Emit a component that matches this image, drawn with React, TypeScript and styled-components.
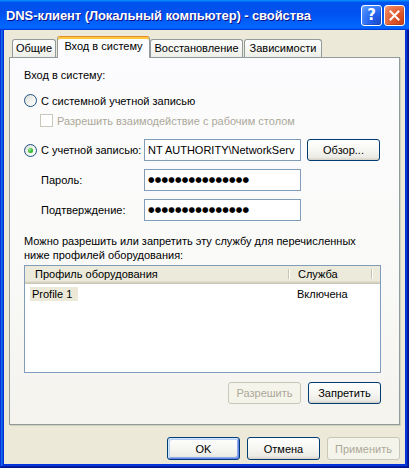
import React from "react";
import styled, { createGlobalStyle } from "styled-components";

const GlobalStyle = createGlobalStyle`
  html, body { margin: 0; padding: 0; background: #ffffff; }
  body { font-family: "Liberation Sans", Arial, sans-serif; font-size: 11px; color: #000; }
  * { box-sizing: border-box; }
`;

const Window = styled.div`
  width: 409px;
  height: 468px;
  display: flex;
  flex-direction: column;
  background: #0831d9;
  box-shadow: inset -1px -1px #00138c, inset 1px 0 #0831d9, inset -2px -2px #001ea0,
    inset 2px 0 #166aee, inset -3px -3px #003bda, inset 3px 0 #0855dd;
`;

const TitleBar = styled.div`
  height: 30px;
  flex: none;
  display: flex;
  align-items: center;
  padding: 0 4px 0 6px;
  background: linear-gradient(
    180deg,
    #0997ff,
    #0053ee 8%,
    #0050ee 40%,
    #0066ff 88%,
    #0066ff 93%,
    #005bff 95%,
    #003dd7 96%,
    #003dd7
  );
`;

const TitleText = styled.div`
  flex: 1;
  color: #fff;
  font-family: "Liberation Sans", Arial, sans-serif;
  font-weight: bold;
  font-size: 13px;
  letter-spacing: -0.1px;
  text-shadow: 1px 1px #0f1089;
  white-space: nowrap;
  padding-top: 1px;
`;

const CaptionButtons = styled.div`
  display: flex;
  gap: 2px;
`;

const CaptionButton = styled.div<{ $variant: "help" | "close" }>`
  width: 21px;
  height: 21px;
  border: 1px solid #fff;
  border-radius: 3px;
  display: flex;
  align-items: center;
  justify-content: center;
  color: #fff;
  font-family: "DejaVu Sans", sans-serif;
  font-weight: bold;
  font-size: 15px;
  background: ${(p) =>
    p.$variant === "close"
      ? "radial-gradient(circle at 85% 85%, #cc4419 0%, #e0582c 40%, #ec7f56 80%, #f7ab8f 100%)"
      : "radial-gradient(circle at 85% 85%, #1c4ed0 0%, #2565f0 40%, #4a8bfb 80%, #7db0ff 100%)"};
  box-shadow: inset -1px -1px rgba(0, 0, 0, 0.15);
`;

const Client = styled.div`
  flex: 1;
  display: flex;
  flex-direction: column;
  margin: 0 4px 4px 4px;
  background: #ece9d8;
  padding: 6px 5px 0 5px;
`;

const TabStrip = styled.div`
  height: 21px;
  flex: none;
  display: flex;
  align-items: flex-end;
  padding-left: 3px;
`;

const Tab = styled.div<{ $w: number; $active?: boolean }>`
  width: ${(p) => p.$w}px;
  height: ${(p) => (p.$active ? 22 : 18)}px;
  margin-right: ${(p) => (p.$active ? 0 : 1)}px;
  margin-bottom: ${(p) => (p.$active ? -1 : 0)}px;
  position: relative;
  z-index: ${(p) => (p.$active ? 2 : 0)};
  border: 1px solid #919b9c;
  border-bottom: none;
  border-top-color: ${(p) => (p.$active ? "#e68b2c" : "#919b9c")};
  border-radius: 3px 3px 0 0;
  display: flex;
  justify-content: center;
  padding-top: ${(p) => (p.$active ? 3 : 2)}px;
  white-space: nowrap;
  background: ${(p) =>
    p.$active
      ? "#fcfcfe"
      : "linear-gradient(180deg, #ffffff, #fafaf9 26%, #f0f0ea 95%, #ecebe6)"};
  box-shadow: ${(p) => (p.$active ? "inset 0 2px #ffc83c" : "none")};
`;

const Panel = styled.div`
  flex: 1;
  border: 1px solid #919b9c;
  background: linear-gradient(180deg, #fcfcfe 0%, #f9f9f7 60%, #f4f3ee 100%);
  box-shadow: 1px 1px #d0cebf;
  padding: 11px 18px 0 14px;
  display: flex;
  flex-direction: column;
`;

const Label = styled.div<{ $mt?: number }>`
  line-height: 13px;
  margin-top: ${(p) => p.$mt ?? 0}px;
`;

const OptionRow = styled.div<{ $mt?: number; $indent?: number }>`
  display: flex;
  align-items: center;
  gap: 4px;
  height: 13px;
  margin-top: ${(p) => p.$mt ?? 0}px;
  padding-left: ${(p) => p.$indent ?? 0}px;
`;

const Radio = styled.span<{ $checked?: boolean }>`
  width: 13px;
  height: 13px;
  flex: none;
  border-radius: 50%;
  border: 1px solid #1c5180;
  background: linear-gradient(135deg, #dcdcd7 0%, #f2f2ee 55%, #ffffff 100%);
  display: inline-flex;
  align-items: center;
  justify-content: center;
  &::after {
    content: "";
    width: 5px;
    height: 5px;
    border-radius: 50%;
    background: radial-gradient(circle at 35% 35%, #8cf08a 0%, #3bbd37 50%, #1e941e 100%);
    display: ${(p) => (p.$checked ? "block" : "none")};
  }
`;

const CheckBox = styled.span`
  width: 13px;
  height: 13px;
  flex: none;
  border: 1px solid #cac8bb;
  background: #ffffff;
`;

const Muted = styled.span`
  color: #aca899;
`;

const FieldRow = styled.div<{ $mt: number }>`
  display: flex;
  align-items: center;
  height: 22px;
  margin-top: ${(p) => p.$mt}px;
`;

const FieldLabel = styled.div<{ $w: number; $indent?: number }>`
  width: ${(p) => p.$w}px;
  padding-left: ${(p) => p.$indent ?? 0}px;
  flex: none;
  display: flex;
  align-items: center;
  gap: 4px;
`;

const TextBox = styled.div<{ $secret?: boolean }>`
  width: 157px;
  height: 22px;
  flex: none;
  border: 1px solid #7f9db9;
  background: #fff;
  padding: 0 3px;
  line-height: 20px;
  white-space: nowrap;
  overflow: hidden;
  font-family: ${(p) => (p.$secret ? '"DejaVu Sans", sans-serif' : '"Liberation Sans", Arial, sans-serif')};
  font-size: ${(p) => (p.$secret ? "7.5px" : "11px")};
  letter-spacing: ${(p) => (p.$secret ? "0.2px" : "0")};
`;

const Button = styled.div<{ $w?: number; $disabled?: boolean; $default?: boolean; $ml?: number }>`
  width: ${(p) => p.$w ?? 73}px;
  height: ${(p) => (p.$default !== undefined ? 23 : 22)}px;
  flex: none;
  margin-left: ${(p) => p.$ml ?? 0}px;
  border: 1px solid ${(p) => (p.$disabled ? "#c9c7ba" : "#003c74")};
  border-radius: 3px;
  display: flex;
  align-items: center;
  justify-content: center;
  color: ${(p) => (p.$disabled ? "#aca899" : "#000")};
  background: ${(p) =>
    p.$disabled ? "#f5f4ea" : "linear-gradient(180deg, #ffffff, #f6f6f2 50%, #ecebe6 86%, #d6d0c5)"};
  box-shadow: ${(p) =>
    p.$default
      ? "inset 1px 1px #cee7ff, inset -1px -1px #6982ee, inset 2px 2px #bcd4f6, inset -2px -2px #89ade4"
      : "none"};
`;

const Paragraph = styled.div`
  margin-top: 13px;
  line-height: 14px;
`;

const ListBox = styled.div`
  margin-top: 3px;
  height: 108px;
  flex: none;
  border: 1px solid #7f9db9;
  background: #fff;
  display: flex;
  flex-direction: column;
`;

const ListHeader = styled.div`
  height: 18px;
  display: flex;
  background: #ebeadb;
  box-shadow: inset 0 -1px #cbc7b8, inset 0 -2px #d6d2c2, inset 0 -3px #e2decd;
`;

const HeaderCell = styled.div<{ $w?: number; $pl: number }>`
  width: ${(p) => (p.$w ? `${p.$w}px` : "auto")};
  flex: ${(p) => (p.$w ? "none" : "1")};
  padding-left: ${(p) => p.$pl}px;
  line-height: 16px;
  white-space: nowrap;
`;

const HeaderSep = styled.div`
  width: 2px;
  flex: none;
  margin: 3px 0 5px;
  border-left: 1px solid #c7c5b2;
  border-right: 1px solid #ffffff;
`;

const ListRow = styled.div`
  display: flex;
  margin-top: 3px;
  height: 14px;
  line-height: 14px;
`;

const RowCell = styled.div<{ $w?: number; $pl: number }>`
  width: ${(p) => (p.$w ? `${p.$w}px` : "auto")};
  flex: none;
  padding-left: ${(p) => p.$pl}px;
  white-space: nowrap;
`;

const SelectedItem = styled.span`
  background: #ece9d8;
  padding: 0 6px 0 2px;
  display: inline-block;
`;

const ButtonRow = styled.div<{ $mt: number; $mb?: number; $gap: number }>`
  display: flex;
  justify-content: flex-end;
  gap: ${(p) => p.$gap}px;
  margin-top: ${(p) => p.$mt}px;
  margin-bottom: ${(p) => p.$mb ?? 0}px;
  flex: none;
`;

export default function App() {
  return (
    <>
      <GlobalStyle />
      <Window>
        <TitleBar>
          <TitleText>DNS-клиент (Локальный компьютер) - свойства</TitleText>
          <CaptionButtons>
            <CaptionButton $variant="help">?</CaptionButton>
            <CaptionButton $variant="close">
              <svg width="11" height="11" viewBox="0 0 11 11">
                <path d="M1.5 1.5 L9.5 9.5 M9.5 1.5 L1.5 9.5" stroke="#fff" strokeWidth="2" strokeLinecap="square" />
              </svg>
            </CaptionButton>
          </CaptionButtons>
        </TitleBar>
        <Client>
          <TabStrip>
            <Tab $w={44}>Общие</Tab>
            <Tab $w={93} $active>
              Вход в систему
            </Tab>
            <Tab $w={93}>Восстановление</Tab>
            <Tab $w={78}>Зависимости</Tab>
          </TabStrip>
          <Panel>
            <Label>Вход в систему:</Label>
            <OptionRow $mt={12}>
              <Radio />
              <span>С системной учетной записью</span>
            </OptionRow>
            <OptionRow $mt={7} $indent={16}>
              <CheckBox />
              <Muted>Разрешить взаимодействие с рабочим столом</Muted>
            </OptionRow>
            <FieldRow $mt={12}>
              <FieldLabel $w={120}>
                <Radio $checked />
                <span>С учетной записью:</span>
              </FieldLabel>
              <TextBox>NT AUTHORITY\NetworkServ</TextBox>
              <Button $ml={6}>Обзор...</Button>
            </FieldRow>
            <FieldRow $mt={8}>
              <FieldLabel $w={120} $indent={17}>
                Пароль:
              </FieldLabel>
              <TextBox $secret>●●●●●●●●●●●●●●●</TextBox>
            </FieldRow>
            <FieldRow $mt={8}>
              <FieldLabel $w={120} $indent={17}>
                Подтверждение:
              </FieldLabel>
              <TextBox $secret>●●●●●●●●●●●●●●●</TextBox>
            </FieldRow>
            <Paragraph>
              Можно разрешить или запретить эту службу для перечисленных
              <br />
              ниже профилей оборудования:
            </Paragraph>
            <ListBox>
              <ListHeader>
                <HeaderCell $w={263} $pl={10}>
                  Профиль оборудования
                </HeaderCell>
                <HeaderSep />
                <HeaderCell $w={81} $pl={8}>
                  Служба
                </HeaderCell>
                <HeaderSep />
                <HeaderCell $pl={0} />
              </ListHeader>
              <ListRow>
                <RowCell $w={265} $pl={5}>
                  <SelectedItem>Profile 1</SelectedItem>
                </RowCell>
                <RowCell $pl={7}>Включена</RowCell>
              </ListRow>
            </ListBox>
            <ButtonRow $mt={9} $gap={7}>
              <Button $disabled>Разрешить</Button>
              <Button>Запретить</Button>
            </ButtonRow>
          </Panel>
          <ButtonRow $mt={12} $mb={4} $gap={7}>
            <Button $default>OK</Button>
            <Button $default={false}>Отмена</Button>
            <Button $default={false} $disabled>
              Применить
            </Button>
          </ButtonRow>
        </Client>
      </Window>
    </>
  );
}
